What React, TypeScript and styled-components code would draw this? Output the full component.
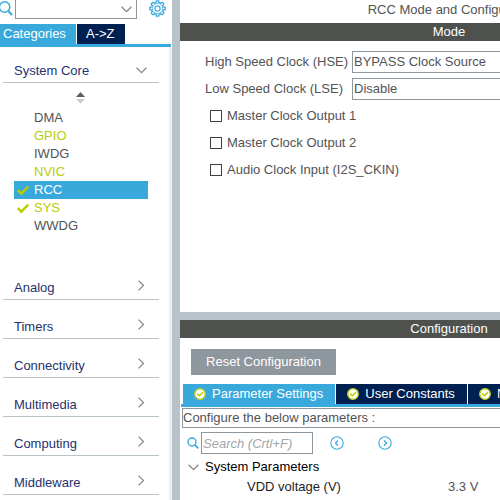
import React from "react";
import styled, { createGlobalStyle } from "styled-components";

const c = {
  blue: "#39a9dc",
  navy: "#002052",
  steel: "#b8c3c9",
  bar: "#4f514f",
  grey: "#8f979e",
  text: "#525355",
  link: "#27306e",
  lime: "#bbcc01",
};

const GlobalStyle = createGlobalStyle`
  * { box-sizing: border-box; }
  body { margin: 0; overflow: hidden; background: #fff; }
  body, button, input, select {
    font-family: "Liberation Sans", Arial, sans-serif;
    font-size: 13px;
    line-height: 18px;
  }
  button { border: 0; padding: 0; background: none; text-align: left; }
  h1, h2 { margin: 0; font-size: 13px; font-weight: normal; }
  svg { display: block; flex: none; }
`;

const Page = styled.div`
  display: flex;
  height: 100vh;
  overflow: hidden;
  color: ${c.text};
`;

const Sidebar = styled.nav`
  flex: 0 0 172px;
  display: flex;
  flex-direction: column;
  overflow: hidden;
`;

const SearchRow = styled.div`
  display: flex;
  height: 24px;
  align-items: flex-start;
`;

const ComboWrap = styled.div`
  display: grid;
  width: 122px;
  height: 19px;
  margin: 0 12px 0 2px;
  align-items: center;
  > * { grid-area: 1 / 1; }
  > svg { justify-self: end; margin-right: 5px; pointer-events: none; }
`;

const Combo = styled.select`
  appearance: none;
  width: 100%;
  height: 19px;
  border: 1px solid ${c.grey};
  border-top: 0;
  border-radius: 0;
  background: #fff;
`;

const SideTabs = styled.div`
  display: flex;
  gap: 1px;
  margin-right: 1px;
  border-bottom: 3px solid ${c.blue};
`;

const SideTab = styled.button<{ $active?: boolean }>`
  height: 20px;
  width: ${(p) => (p.$active ? 76 : 48)}px;
  padding-left: ${(p) => (p.$active ? 3 : 9)}px;
  padding-bottom: 1px;
  color: #fff;
  background: ${(p) => (p.$active ? c.blue : c.navy)};
`;

const SideBody = styled.div`
  flex: 1;
  overflow: hidden;
  border-right: 3px solid #eef0f1;
`;

const Category = styled.button<{ $first?: boolean }>`
  display: flex;
  justify-content: space-between;
  align-items: flex-end;
  width: calc(100% - 10px);
  height: ${(p) => (p.$first ? 36 : 39)}px;
  padding: 0 12px 2px 11px;
  margin: 0 10px 0 3px;
  width: calc(100% - 13px);
  border-bottom: 1px solid ${c.steel};
  color: ${c.link};
  svg { margin-bottom: 6px; }
`;

const SortButton = styled.button`
  display: block;
  height: 26px;
  margin-left: 76px;
  padding: 4px 0 0;
`;

const List = styled.ul`
  list-style: none;
  margin: 0 21px 0 14px;
  padding: 0;
`;

const Item = styled.button<{ $tone?: "set" | "selected" }>`
  display: grid;
  grid-template-columns: 17px 1fr;
  align-items: center;
  width: 100%;
  height: 18px;
  padding-left: 3px;
  color: ${(p) => (p.$tone === "selected" ? "#fff" : p.$tone === "set" ? c.lime : c.text)};
  background: ${(p) => (p.$tone === "selected" ? c.blue : "transparent")};
  span { grid-column: 2; }
`;

const Groups = styled.div`
  padding-top: 26px;
`;

const Splitter = styled.div`
  flex: 0 0 8px;
  background: ${c.steel};
`;

const Main = styled.main`
  flex: 1 0 538px;
  display: flex;
  flex-direction: column;
`;

const Title = styled.h1`
  height: 23px;
  padding: 1px 0 0 8px;
  text-align: center;
`;

const Bar = styled.h2`
  height: 18px;
  color: #fff;
  background: ${c.bar};
  text-align: center;
`;

const ModePanel = styled.section`
  flex: 0 0 289px;
`;

const Fields = styled.div`
  display: grid;
  grid-template-columns: 147px 1fr;
  gap: 5px 0;
  align-items: center;
  padding: 10px 10px 0 25px;
`;

const Field = styled.select`
  appearance: none;
  width: 100%;
  height: 22px;
  padding: 0 1px;
  border: 1px solid ${c.grey};
  border-radius: 0;
  color: ${c.text};
  background: #fff;
`;

const Checks = styled.div`
  display: flex;
  flex-direction: column;
  gap: 9px;
  padding: 7px 0 0 30px;
`;

const Check = styled.label`
  display: flex;
  align-items: center;
  gap: 5px;
`;

const Box = styled.input`
  appearance: none;
  width: 12px;
  height: 12px;
  margin: 0;
  border: 1px solid #3f4042;
  background: #fff;
  &:checked { background: ${c.blue}; }
`;

const ConfigPanel = styled.section`
  flex: 1;
`;

const Reset = styled.button`
  display: block;
  width: 145px;
  height: 26px;
  margin: 11px 0 9px 11px;
  color: #fff;
  background: ${c.grey};
  text-align: center;
`;

const Tabs = styled.div`
  display: flex;
  gap: 1px;
  margin: 0 0 1px 1px;
  padding-left: 2px;
  border-bottom: 3px solid ${c.blue};
`;

const Tab = styled.button<{ $active?: boolean }>`
  display: flex;
  align-items: center;
  gap: 6px;
  height: 20px;
  padding: 0 12px 0 11px;
  white-space: nowrap;
  color: #fff;
  background: ${(p) => (p.$active ? c.blue : c.navy)};
`;

const Hint = styled.p`
  height: 20px;
  margin: 0 0 4px 2px;
  border: 1px solid ${c.grey};
`;

const FindRow = styled.div`
  display: flex;
  align-items: center;
  height: 22px;
  padding-left: 7px;
`;

const Find = styled.input`
  width: 112px;
  height: 22px;
  margin: 0 17px 0 2px;
  padding: 0 1px;
  border: 1px solid ${c.grey};
  &::placeholder { color: #a3a6a8; font-style: italic; opacity: 1; }
`;

const Step = styled.button`
  margin-right: 34px;
`;

const Params = styled.table`
  margin-top: 3px;
  border-collapse: collapse;
  color: #1d1d1d;
  th, td { height: 20px; padding: 0; font-weight: normal; text-align: left; }
  td { color: ${c.text}; }
`;

const Name = styled.th<{ $child?: boolean }>`
  width: 268px;
  && { padding-left: ${(p) => (p.$child ? 67 : 8)}px; }
`;

const Expand = styled.button`
  display: flex;
  align-items: center;
  gap: 6px;
  color: #000;
`;

const ChevronDown = () => (
  <svg width="11" height="7" viewBox="0 0 11 7" fill="none" stroke="#858789" strokeWidth="1.3">
    <path d="M.6.8 5.5 5.7 10.4.8" />
  </svg>
);

const ChevronRight = () => (
  <svg width="9" height="11" viewBox="0 0 9 11" fill="none" stroke="#858789" strokeWidth="1.3">
    <path d="M.5.6 5.5 5.5.5 10.4" />
  </svg>
);

const Magnifier = () => (
  <svg width="12" height="12" viewBox="0 0 12 12" fill="none" stroke={c.blue} strokeWidth="1.4">
    <circle cx="5" cy="5" r="4" />
    <path d="M7.9 7.9 11.3 11.3" strokeWidth="1.8" />
  </svg>
);

const LargeMagnifier = () => (
  <svg width="13" height="16" viewBox="0 0 13 16" fill="none" stroke={c.blue} strokeWidth="1.5">
    <circle cx="4.6" cy="7" r="5.2" />
    <path d="M8.3 11 12 15" strokeWidth="2" />
  </svg>
);

const teeth = Array.from({ length: 8 }, (_, i) => i * 45);

const Gear = () => (
  <svg width="17" height="17" viewBox="-8.5 -8.5 17 17" fill="none" stroke={c.blue} strokeWidth="1.3">
    {teeth.map((a) => (
      <path
        key={a}
        transform={`rotate(${a})`}
        d="M-2.3-5.6-1.6-5.9-1.2-7.7H1.2L1.6-5.9 2.3-5.6"
      />
    ))}
    <circle r="5.2" strokeWidth=".8" />
    <circle r="2.6" />
  </svg>
);

const Tick = () => (
  <svg width="12" height="11" viewBox="0 0 12 11" fill="none" stroke={c.lime} strokeWidth="2.4">
    <path d="M.8 5.2 4.3 8.7 11.2 1.5" />
  </svg>
);

const Badge = () => (
  <svg width="12" height="12" viewBox="0 0 12 12" fill="none">
    <circle cx="6" cy="6" r="5.2" fill="#fff" stroke="#c3d12b" strokeWidth="1.5" />
    <path d="M3.2 5.6 5.4 7.8 9 4.3" stroke={c.lime} strokeWidth="1.5" />
  </svg>
);

const CircleArrow = ({ next }: { next?: boolean }) => (
  <svg width="14" height="14" viewBox="0 0 14 14" fill="none" stroke={c.blue} strokeWidth="1.1">
    <circle cx="7" cy="7" r="6.2" />
    <path d={next ? "M6 4.5 8.5 7 6 9.5" : "M8 4.5 5.5 7 8 9.5"} strokeWidth="1.3" />
  </svg>
);

const SortArrows = () => (
  <svg width="9" height="12" viewBox="0 0 9 12">
    <path d="M0 5 4.5 0 9 5Z" fill="#5c5e60" />
    <path d="M0 7H9L4.5 11.5Z" fill="#c8cacb" />
  </svg>
);

type Peripheral = { name: string; tone?: "set" | "selected"; ticked?: boolean };

const peripherals: Peripheral[] = [
  { name: "DMA" },
  { name: "GPIO", tone: "set" },
  { name: "IWDG" },
  { name: "NVIC", tone: "set" },
  { name: "RCC", tone: "selected", ticked: true },
  { name: "SYS", tone: "set", ticked: true },
  { name: "WWDG" },
];

const groups = ["Analog", "Timers", "Connectivity", "Multimedia", "Computing", "Middleware"];
const outputs = ["Master Clock Output 1", "Master Clock Output 2", "Audio Clock Input (I2S_CKIN)"];
const tabs = ["Parameter Settings", "User Constants", "NVIC Settings"];

export default function App() {
  return (
    <Page>
      <GlobalStyle />
      <Sidebar aria-label="Peripherals">
        <SearchRow>
          <LargeMagnifier />
          <ComboWrap>
            <Combo aria-label="Search peripherals" defaultValue="">
              <option value="" />
            </Combo>
            <ChevronDown />
          </ComboWrap>
          <button aria-label="Settings">
            <Gear />
          </button>
        </SearchRow>
        <SideTabs>
          <SideTab $active>Categories</SideTab>
          <SideTab>A-&gt;Z</SideTab>
        </SideTabs>
        <SideBody>
          <Category $first aria-expanded="true">
            System Core
            <ChevronDown />
          </Category>
          <SortButton aria-label="Sort">
            <SortArrows />
          </SortButton>
          <List>
            {peripherals.map((p) => (
              <li key={p.name}>
                <Item $tone={p.tone}>
                  {p.ticked && <Tick />}
                  <span>{p.name}</span>
                </Item>
              </li>
            ))}
          </List>
          <Groups>
            {groups.map((g) => (
              <Category key={g} aria-expanded="false">
                {g}
                <ChevronRight />
              </Category>
            ))}
          </Groups>
        </SideBody>
      </Sidebar>
      <Splitter />
      <Main>
        <Title>RCC Mode and Configuration</Title>
        <ModePanel>
          <Bar>Mode</Bar>
          <Fields>
            <label htmlFor="hse">High Speed Clock (HSE)</label>
            <Field id="hse">
              <option>BYPASS Clock Source</option>
            </Field>
            <label htmlFor="lse">Low Speed Clock (LSE)</label>
            <Field id="lse">
              <option>Disable</option>
            </Field>
          </Fields>
          <Checks>
            {outputs.map((o) => (
              <Check key={o}>
                <Box type="checkbox" />
                {o}
              </Check>
            ))}
          </Checks>
        </ModePanel>
        <Splitter />
        <ConfigPanel>
          <Bar>Configuration</Bar>
          <Reset>Reset Configuration</Reset>
          <Tabs>
            {tabs.map((t, i) => (
              <Tab key={t} $active={i === 0}>
                <Badge />
                {t}
              </Tab>
            ))}
          </Tabs>
          <Hint>Configure the below parameters :</Hint>
          <FindRow>
            <Magnifier />
            <Find type="text" aria-label="Search parameters" placeholder="Search (Crtl+F)" />
            <Step aria-label="Previous">
              <CircleArrow />
            </Step>
            <Step aria-label="Next">
              <CircleArrow next />
            </Step>
          </FindRow>
          <Params>
            <tbody>
              <tr>
                <Name scope="row">
                  <Expand aria-expanded="true">
                    <ChevronDown />
                    System Parameters
                  </Expand>
                </Name>
                <td />
              </tr>
              <tr>
                <Name scope="row" $child>
                  VDD voltage (V)
                </Name>
                <td>3.3 V</td>
              </tr>
            </tbody>
          </Params>
        </ConfigPanel>
      </Main>
    </Page>
  );
}
